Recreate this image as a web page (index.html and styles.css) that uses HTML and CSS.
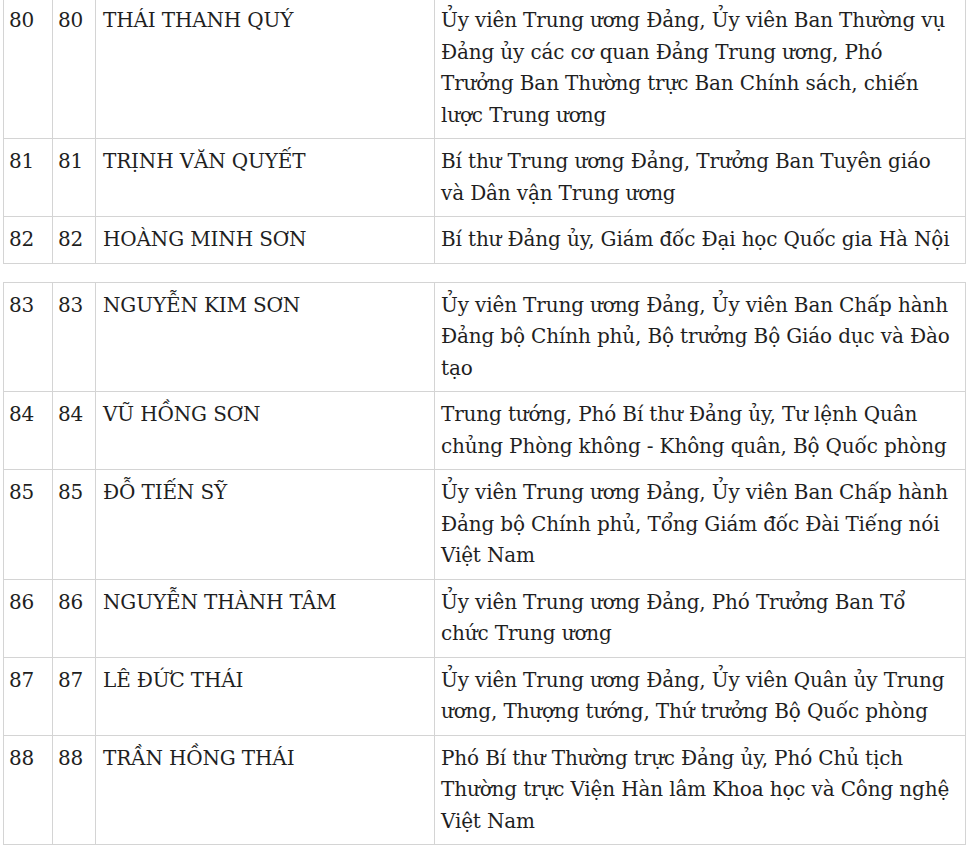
FILE: index.html
```html
<!DOCTYPE html>
<html lang="vi">
<head>
<meta charset="utf-8">
<title>Danh sách</title>
<link rel="stylesheet" href="styles.css">
</head>
<body>
<div class="page">
  <table class="list">
    <colgroup><col class="c-stt"><col class="c-no"><col class="c-name"><col class="c-pos"></colgroup>
    <tbody>
      <tr><td class="num">80</td><td class="num">80</td><td>THÁI THANH QUÝ</td><td class="pos">Ủy viên Trung ương Đảng, Ủy viên Ban Thường vụ Đảng ủy các cơ quan Đảng Trung ương, Phó Trưởng Ban Thường trực Ban Chính sách, chiến lược Trung ương</td></tr>
      <tr><td class="num">81</td><td class="num">81</td><td>TRỊNH VĂN QUYẾT</td><td class="pos">Bí thư Trung ương Đảng, Trưởng Ban Tuyên giáo và Dân vận Trung ương</td></tr>
      <tr><td class="num">82</td><td class="num">82</td><td>HOÀNG MINH SƠN</td><td class="pos">Bí thư Đảng ủy, Giám đốc Đại học Quốc gia Hà Nội</td></tr>
    </tbody>
  </table>
  <table class="list">
    <colgroup><col class="c-stt"><col class="c-no"><col class="c-name"><col class="c-pos"></colgroup>
    <tbody>
      <tr><td class="num">83</td><td class="num">83</td><td>NGUYỄN KIM SƠN</td><td class="pos">Ủy viên Trung ương Đảng, Ủy viên Ban Chấp hành Đảng bộ Chính phủ, Bộ trưởng Bộ Giáo dục và Đào tạo</td></tr>
      <tr><td class="num">84</td><td class="num">84</td><td>VŨ HỒNG SƠN</td><td class="pos">Trung tướng, Phó Bí thư Đảng ủy, Tư lệnh Quân chủng Phòng không - Không quân, Bộ Quốc phòng</td></tr>
      <tr><td class="num">85</td><td class="num">85</td><td>ĐỖ TIẾN SỸ</td><td class="pos">Ủy viên Trung ương Đảng, Ủy viên Ban Chấp hành Đảng bộ Chính phủ, Tổng Giám đốc Đài Tiếng nói Việt Nam</td></tr>
      <tr><td class="num">86</td><td class="num">86</td><td>NGUYỄN THÀNH TÂM</td><td class="pos">Ủy viên Trung ương Đảng, Phó Trưởng Ban Tổ chức Trung ương</td></tr>
      <tr><td class="num">87</td><td class="num">87</td><td>LÊ ĐỨC THÁI</td><td class="pos">Ủy viên Trung ương Đảng, Ủy viên Quân ủy Trung ương, Thượng tướng, Thứ trưởng Bộ Quốc phòng</td></tr>
      <tr><td class="num">88</td><td class="num">88</td><td>TRẦN HỒNG THÁI</td><td class="pos">Phó Bí thư Thường trực Đảng ủy, Phó Chủ tịch Thường trực Viện Hàn lâm Khoa học và Công nghệ Việt Nam</td></tr>
    </tbody>
  </table>
</div>
</body>
</html>
```

FILE: styles.css
```css
html, body {
  margin: 0;
  padding: 0;
  background: #fff;
}

.page {
  margin: -3px 0 0 3px;
  width: 962px;
  display: flex;
  flex-direction: column;
  gap: 18px;
}

.list {
  width: 962px;
  border-collapse: collapse;
  table-layout: fixed;
  font-family: "DejaVu Serif", "Liberation Serif", serif;
  font-size: 20px;
  line-height: 31.5px;
  letter-spacing: -0.15px;
  color: #1f1f1f;
}

.c-stt { width: 49px; }
.c-no { width: 43px; }
.c-name { width: 339px; }
.c-pos { width: 531px; }

.list td {
  border: 1px solid #d4d4d4;
  padding: 7px;
  vertical-align: top;
  text-align: left;
}

.list td.num {
  padding-left: 5px;
}

.list td.pos {
  padding-left: 6px;
}
```
